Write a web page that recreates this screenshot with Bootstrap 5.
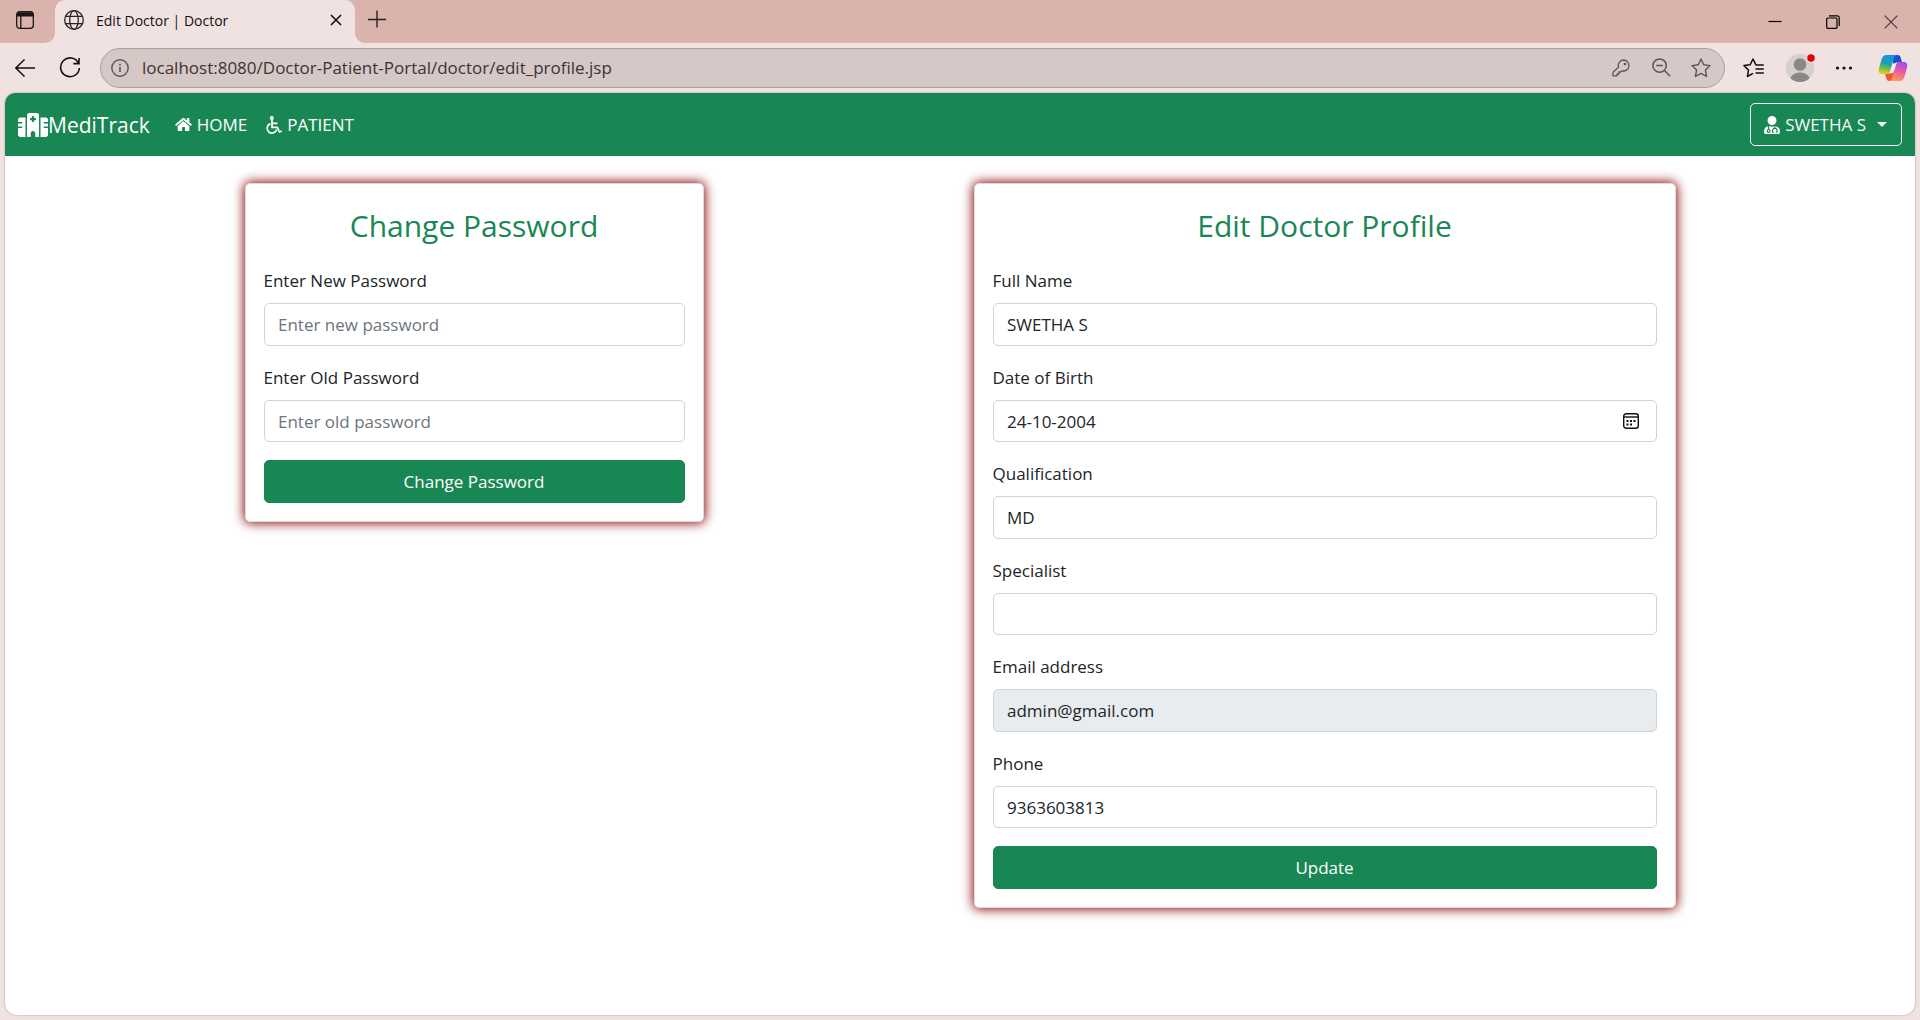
<!DOCTYPE html>
<html lang="en">
<head>
<meta charset="utf-8">
<meta name="viewport" content="width=device-width, initial-scale=1">
<title>Edit Doctor | Doctor</title>
<link href="https://cdn.jsdelivr.net/npm/bootstrap@5.3.0/dist/css/bootstrap.min.css" rel="stylesheet">
<style>
  :root { --strip: #d9b3ac; --bar: #f0e2e1; --brand-green: #198754; }
  html { font-size: 18px; }
  body { font-family: "Open Sans", "Noto Sans", sans-serif; font-size: 17px; line-height: 27px; background: var(--bar); }
  svg { display: block; flex: none; }
  .plain-btn { background: none; border: 0; padding: 0; color: #111; display: flex; align-items: center; justify-content: center; }

  /* browser tab strip */
  .tab-strip { height: 43px; background: linear-gradient(var(--strip) 20px, var(--bar) 20px); }
  .strip-start { width: 55px; background: var(--strip); border-radius: 0 0 10px 0; padding: 0 5px 3px 0; }
  .strip-end { background: var(--strip); border-radius: 0 0 0 10px; padding-left: 12px; }
  .page-tab { width: 300px; background: var(--bar); border-radius: 10px 10px 0 0; padding: 0 13px 3px 9px; gap: 12px; font-size: 14px; color: #111; }
  .win-btn { width: 58px; height: 43px; }

  /* browser toolbar */
  .toolbar { height: 50px; gap: 16px; padding: 0 12px 1px 14px; }
  .nav-tools { gap: 23px; }
  .address { height: 40px; border: 1px solid #ae9f9e; border-radius: 20px; background: #d6c8c7; padding: 0 13px 0 10px; color: #5f5554; margin-left: 3px; margin-right: 2px; }
  .address input { background: none; border: 0; outline: 0; font-size: 17px; color: #3c3434; padding: 0 0 0 13px; min-width: 0; }
  .address .plain-btn { color: #5f5554; width: 20px; }
  .address-tools { gap: 20px; }

  /* page frame */
  .viewport-frame { margin: 0 5px 5px; border-radius: 10px 10px 12px 12px; background: #fff; box-shadow: 0 0 2px rgba(90, 40, 40, .45); overflow: hidden; }
  .bg-success { background-color: var(--brand-green) !important; }
  .navbar .container-fluid { padding-left: 13px; }
  .navbar-brand { font-size: 21px; line-height: 34px; margin-right: 16px; }
  .navbar .nav-link, .navbar .navbar-brand { color: #fff; }
  .navbar .nav-link { padding: 9px; gap: 5px; font-size: 17px; }
  .btn, .form-control { font-size: 17px; line-height: 27px; }
  .btn { --bs-btn-border-radius: 5px; }
  .form-control { border-radius: 5px; border-color: #ced4da; }
  .user-menu { gap: 5px; }
  .user-menu::after { margin-left: 6px; border-top-width: 5px; border-right-width: 5px; border-left-width: 5px; }

  /* content */
  .page-box { max-width: 1485px; }
  .panel { border-radius: 5px; box-shadow: 0 0 12px 1px #8b0000; border-color: #dcdcdc; }
  .panel-title { font-size: 30px; line-height: 47px; }
  .form-control[readonly] { background: #e9ecef; }
  .form-control::placeholder { color: #6c757d; }
  .pick-date { position: absolute; right: 18px; top: 13px; }
</style>
</head>
<body class="d-flex flex-column min-vh-100">

<header>
  <div class="tab-strip d-flex">
    <div class="strip-start d-flex align-items-center justify-content-center">
      <button class="plain-btn" type="button" aria-label="Tab actions">
        <svg width="18" height="18" viewBox="0 0 18 18" fill="none" stroke="#1a1414" stroke-width="1.3"><rect x=".7" y=".7" width="16.6" height="16.6" rx="3"/><path d="M1 3.5h16M1 2.2h16M1 4.6h16" stroke-width="2"/><path d="M4.8 5v12"/></svg>
      </button>
    </div>
    <div class="page-tab d-flex align-items-center">
      <svg width="20" height="20" viewBox="0 0 20 20" fill="none" stroke="#2a2424" stroke-width="1.3"><circle cx="10" cy="10" r="9.3"/><ellipse cx="10" cy="10" rx="4.3" ry="9.3"/><path d="M1.7 6.4h16.6M1.7 13.6h16.6"/></svg>
      <span class="flex-grow-1">Edit Doctor | Doctor</span>
      <button class="plain-btn" type="button" aria-label="Close tab"><svg width="12" height="12" viewBox="0 0 12 12" stroke="#111" stroke-width="1.6"><path d="M1 1l10 10M11 1L1 11"/></svg></button>
    </div>
    <div class="strip-end flex-grow-1 d-flex align-items-center justify-content-between">
      <button class="plain-btn pb-1" type="button" aria-label="New tab"><svg width="20" height="18" viewBox="0 0 20 18" stroke="#2a2020" stroke-width="1.4"><path d="M1 9.5h18M10 .5v17"/></svg></button>
      <div class="d-flex">
        <button class="plain-btn win-btn" type="button" aria-label="Minimize"><svg width="14" height="14" viewBox="0 0 14 14" stroke="#000" stroke-width="1.2"><path d="M.5 6.5h13"/></svg></button>
        <button class="plain-btn win-btn" type="button" aria-label="Restore"><svg width="14" height="14" viewBox="0 0 14 14" fill="none" stroke="#000" stroke-width="1.2"><rect x=".7" y="3" width="10.3" height="10.3" rx="1"/><path d="M3 .8h8.2a2 2 0 0 1 2 2V11"/></svg></button>
        <button class="plain-btn win-btn" type="button" aria-label="Close"><svg width="14" height="14" viewBox="0 0 14 14" stroke="#4a3836" stroke-width="1.2"><path d="M.7.7l12.6 12.6M13.3.7L.7 13.3"/></svg></button>
      </div>
    </div>
  </div>

  <div class="toolbar d-flex align-items-center">
    <div class="nav-tools d-flex align-items-center">
      <button class="plain-btn" type="button" aria-label="Back"><svg width="22" height="20" viewBox="0 0 22 20" fill="none" stroke="#111" stroke-width="1.5"><path d="M21 10H1.5M10.5 1.5L1.8 10l8.7 8.5"/></svg></button>
      <button class="plain-btn" type="button" aria-label="Refresh"><svg width="22" height="22" viewBox="0 0 22 22" fill="none" stroke="#111" stroke-width="1.6"><path d="M19.5 6.2A9.4 9.4 0 1 0 20.4 11M20 1v5.6h-5.7"/></svg></button>
    </div>
    <div class="address flex-grow-1 d-flex align-items-center">
      <svg width="18" height="18" viewBox="0 0 18 18" fill="none" stroke="#5f5554" stroke-width="1.4"><circle cx="9" cy="9" r="8.2"/><path d="M9 8v5M9 4.8v1.7" stroke-width="1.6"/></svg>
      <input class="flex-grow-1" type="text" aria-label="Address" value="localhost:8080/Doctor-Patient-Portal/doctor/edit_profile.jsp">
      <div class="address-tools d-flex align-items-center">
        <button class="plain-btn" type="button" aria-label="Passwords"><svg width="18" height="18" viewBox="0 0 18 18" fill="none" stroke="currentColor" stroke-width="1.3" stroke-linejoin="round"><path d="M11.500 1a5.500 5.500 0 1 1-1.500 10.800L8.700 13H7v2H5v1.800H1v-3.600l5.500-5A5.500 5.500 0 0 1 11.500 1z"/><circle cx="13" cy="5" r=".7" fill="currentColor"/></svg></button>
        <button class="plain-btn" type="button" aria-label="Zoom"><svg width="19" height="19" viewBox="0 0 19 19" fill="none" stroke="currentColor" stroke-width="1.5"><circle cx="7.600" cy="7.600" r="6.700"/><path d="M4.200 7.600H11M12.500 12.500l5.700 5.700"/></svg></button>
        <button class="plain-btn" type="button" aria-label="Add to favorites"><svg width="20" height="20" viewBox="0 0 20 20" fill="none" stroke="currentColor" stroke-width="1.400" stroke-linejoin="round"><path d="M10 1l2.700 5.700 6.300.9-4.600 4.400 1.200 6.500-5.600-3.100-5.600 3.100 1.200-6.500L1 7.600l6.300-.9z"/></svg></button>
      </div>
    </div>
    <button class="plain-btn me-1" type="button" aria-label="Favorites"><svg width="21" height="20" viewBox="0 0 21 20" fill="none" stroke="#111" stroke-width="1.500" stroke-linejoin="round"><path d="M13 6.700h-.2L10 1 7.200 6.700l-6.200.9 4.500 4.400-1.100 6.500L10 15.400M12.500 7h8.300M12.500 11h8.300M12.500 15h8.300"/></svg></button>
    <button class="plain-btn" type="button" aria-label="Profile"><svg width="30" height="30" viewBox="0 0 30 30"><defs><clipPath id="face"><circle cx="15" cy="15" r="14"/></clipPath></defs><circle cx="15" cy="15" r="14" fill="#d3d0ce"/><g fill="#8b8784" clip-path="url(#face)"><circle cx="15" cy="11.500" r="6.300"/><ellipse cx="15" cy="27" rx="10" ry="7.500"/></g><circle cx="26" cy="5" r="4.600" fill="#f7eceb"/><circle cx="26" cy="5" r="3.800" fill="#e00000"/></svg></button>
    <button class="plain-btn mx-1" type="button" aria-label="Settings and more"><svg width="18" height="6" viewBox="0 0 18 6" fill="#111"><circle cx="2.500" cy="3" r="1.600"/><circle cx="9" cy="3" r="1.600"/><circle cx="15.500" cy="3" r="1.600"/></svg></button>
    <button class="plain-btn ms-1" type="button" aria-label="Copilot">
      <svg width="30" height="28" viewBox="0 0 30 28">
        <defs>
          <linearGradient id="cpA" x1=".5" y1="0" x2=".3" y2="1"><stop offset="0" stop-color="#1593e8"/><stop offset=".45" stop-color="#1fa0b0"/><stop offset=".75" stop-color="#7cc242"/><stop offset="1" stop-color="#f5cf0a"/></linearGradient>
          <linearGradient id="cpB" x1=".6" y1="0" x2=".3" y2="1"><stop offset="0" stop-color="#a24df0"/><stop offset=".5" stop-color="#ee5f9c"/><stop offset="1" stop-color="#ffa050"/></linearGradient>
        </defs>
        <path d="M14 1h5.500c2 0 2.800 1.300 3.300 3l1.200 4.500h-5c-2 0-3 1-3.600 3z" fill="#1a4fd0"/>
        <path d="M16 27h-4.500c-2 0-2.800-1.300-3.300-3L7 19.500h5c2 0 3-1 3.600-3z" fill="#f0562c"/>
        <path d="M8.500 1H19c-2 0-2.700 1.500-3.300 3.500l-3.500 12c-.7 2.300-1.500 3.500-4.200 3.500H4c-3 0-3.800-2.500-3-5.500l2.500-9C4.400 2.500 6 1 8.500 1z" fill="url(#cpA)"/>
        <path d="M21.500 27H11c2 0 2.700-1.500 3.300-3.500l3.500-12C18.500 9.200 19.300 8 22 8h4c3 0 3.800 2.500 3 5.500l-2.500 9c-.9 3-2.500 4.500-5 4.500z" fill="url(#cpB)"/>
        <path d="M15.200 9.500h2.600l-3 9.500h-3.200c.8-.6 1.200-1.500 1.600-2.800z" fill="#f8efee"/>
      </svg>
    </button>
  </div>
</header>

<div class="viewport-frame flex-grow-1">
  <nav class="navbar navbar-expand navbar-dark bg-success">
    <div class="container-fluid">
      <a class="navbar-brand d-flex align-items-center" href="#">
        <svg width="30" height="24" viewBox="0 0 640 512" fill="#fff"><path d="M192 48c0-26.500 21.500-48 48-48H400c26.500 0 48 21.500 48 48V512H368V432c0-26.500-21.500-48-48-48s-48 21.500-48 48v80H192V48zM48 96H160V512H48c-26.500 0-48-21.500-48-48V320H80c8.800 0 16-7.200 16-16s-7.200-16-16-16H0V224H80c8.800 0 16-7.200 16-16s-7.200-16-16-16H0V144c0-26.500 21.500-48 48-48zm544 0c26.500 0 48 21.500 48 48v48H560c-8.800 0-16 7.200-16 16s7.200 16 16 16h80v64H560c-8.800 0-16 7.200-16 16s7.200 16 16 16h80V464c0 26.500-21.500 48-48 48H480V96H592zM312 64c-8.800 0-16 7.200-16 16v24H272c-8.800 0-16 7.200-16 16v16c0 8.800 7.200 16 16 16h24v24c0 8.800 7.200 16 16 16h16c8.800 0 16-7.200 16-16V152h24c8.800 0 16-7.200 16-16V120c0-8.800-7.200-16-16-16H344V80c0-8.800-7.200-16-16-16H312z"/></svg>MediTrack</a>
      <ul class="navbar-nav me-auto">
        <li class="nav-item"><a class="nav-link d-flex align-items-center" href="#">
          <svg width="17" height="15" viewBox="0 0 576 512" fill="#fff"><path d="M488 312.700V456c0 13.300-10.700 24-24 24H348c-6.600 0-12-5.400-12-12V356c0-6.600-5.400-12-12-12h-72c-6.600 0-12 5.400-12 12v112c0 6.600-5.400 12-12 12H112c-13.300 0-24-10.700-24-24V312.700c0-3.600 1.600-7 4.400-9.300l188-154.800c4.400-3.600 10.800-3.600 15.300 0l188 154.800c2.700 2.300 4.300 5.700 4.300 9.300zm83.600-60.900L488 182.900V44.400c0-6.600-5.400-12-12-12h-56c-6.600 0-12 5.400-12 12V117l-89.500-73.700c-17.700-14.600-43.300-14.600-61 0L4.400 251.800c-5.100 4.200-5.800 11.800-1.600 16.900l25.500 31c4.200 5.100 11.800 5.800 16.900 1.600l235.200-193.700c4.400-3.600 10.800-3.600 15.300 0l235.200 193.700c5.100 4.200 12.700 3.500 16.900-1.600l25.500-31c4.200-5.200 3.400-12.700-1.700-16.900z"/></svg>HOME</a></li>
        <li class="nav-item"><a class="nav-link d-flex align-items-center" href="#">
          <svg width="17" height="18" viewBox="0 0 17 18" fill="none" stroke="#fff" stroke-width="1.700" stroke-linejoin="round"><circle cx="6.800" cy="2" r="2" fill="#fff" stroke="none"/><path d="M7 3v8.400h5.400l2 4.600 2.400-1M7.200 7.400h5.200"/><path d="M5.400 7.600a4.900 4.900 0 1 0 6.400 6"/></svg>PATIENT</a></li>
      </ul>
      <button class="btn btn-outline-light user-menu dropdown-toggle d-flex align-items-center" type="button">
        <svg width="16" height="18" viewBox="0 0 448 512" fill="#fff"><path d="M224 256c70.700 0 128-57.300 128-128S294.700 0 224 0 96 57.300 96 128s57.300 128 128 128zM104 424c0 13.300 10.700 24 24 24s24-10.700 24-24-10.700-24-24-24-24 10.700-24 24zm216-135.400v49c36.500 7.400 64 39.800 64 78.400v41.700c0 7.600-5.400 14.200-12.900 15.700l-32.200 6.400c-4.300.9-8.500-1.900-9.400-6.300l-3.100-15.700c-.9-4.300 1.900-8.600 6.300-9.400l19.300-3.900V416c0-62.800-96-65.100-96 1.900v26.700l19.300 3.900c4.300.9 7.100 5.100 6.300 9.400l-3.100 15.700c-.9 4.300-5.100 7.100-9.400 6.300l-31.200-4.200c-7.900-1.100-13.800-7.800-13.800-15.900V416c0-38.600 27.500-70.900 64-78.400v-45.200c-2.200.7-4.400 1.100-6.600 1.900-18 6.300-37.300 9.800-57.400 9.800s-39.400-3.500-57.400-9.800c-7.400-2.600-14.900-4.200-22.600-5.200v81.600c23.100 6.900 40 28.100 40 53.400 0 30.900-25.100 56-56 56s-56-25.100-56-56c0-25.300 16.900-46.500 40-53.400v-80.400C48.500 301 0 355.800 0 422.400v44.800C0 491.900 20.100 512 44.800 512h358.400c24.700 0 44.800-20.100 44.800-44.800v-44.800c0-72-56.800-130.300-128-133.800z"/></svg>SWETHA S</button>
    </div>
  </nav>

  <main class="container page-box p-4">
    <div class="row align-items-start">
      <div class="col-md-4">
        <div class="card panel">
          <div class="card-body">
            <p class="panel-title text-center text-success mb-3">Change Password</p>
            <form>
              <div class="mb-3">
                <label class="form-label" for="newPassword">Enter New Password</label>
                <input class="form-control" id="newPassword" type="password" placeholder="Enter new password">
              </div>
              <div class="mb-3">
                <label class="form-label" for="oldPassword">Enter Old Password</label>
                <input class="form-control" id="oldPassword" type="password" placeholder="Enter old password">
              </div>
              <button class="btn btn-success w-100" type="button">Change Password</button>
            </form>
          </div>
        </div>
      </div>
      <div class="col-md-6 offset-md-2">
        <div class="card panel">
          <div class="card-body">
            <p class="panel-title text-center text-success mb-3">Edit Doctor Profile</p>
            <form>
              <div class="mb-3">
                <label class="form-label" for="fullName">Full Name</label>
                <input class="form-control" id="fullName" type="text" value="SWETHA S">
              </div>
              <div class="mb-3">
                <label class="form-label" for="birthDate">Date of Birth</label>
                <div class="position-relative">
                  <input class="form-control" id="birthDate" type="text" value="24-10-2004">
                  <button class="plain-btn pick-date" type="button" aria-label="Pick a date"><svg width="16" height="16" viewBox="0 0 16 16" fill="none" stroke="#111" stroke-width="1.400"><rect x=".7" y=".7" width="14.600" height="14.600" rx="2.500"/><path d="M1 4h14"/><path d="M3.500 8h9.300M3.500 11.500h6" stroke-width="2" stroke-dasharray="2 1.500"/></svg></button>
                </div>
              </div>
              <div class="mb-3">
                <label class="form-label" for="qualification">Qualification</label>
                <input class="form-control" id="qualification" type="text" value="MD">
              </div>
              <div class="mb-3">
                <label class="form-label" for="specialist">Specialist</label>
                <input class="form-control" id="specialist" type="text">
              </div>
              <div class="mb-3">
                <label class="form-label" for="email">Email address</label>
                <input class="form-control" id="email" type="email" value="admin@gmail.com" readonly>
              </div>
              <div class="mb-3">
                <label class="form-label" for="phone">Phone</label>
                <input class="form-control" id="phone" type="tel" value="9363603813">
              </div>
              <button class="btn btn-success w-100" type="button">Update</button>
            </form>
          </div>
        </div>
      </div>
    </div>
  </main>
</div>

<script src="https://cdn.jsdelivr.net/npm/bootstrap@5.3.0/dist/js/bootstrap.bundle.min.js"></script>
</body>
</html>
